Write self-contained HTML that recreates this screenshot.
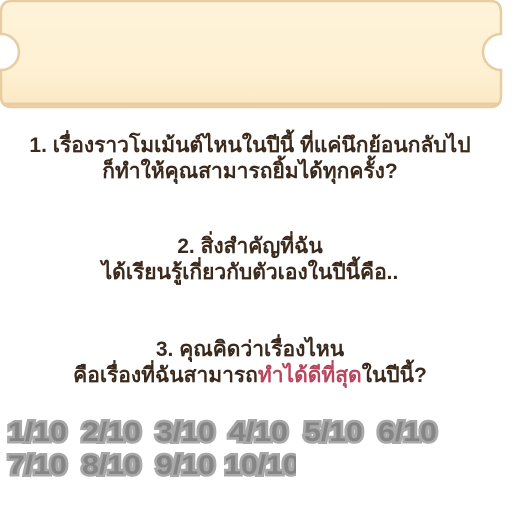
<!DOCTYPE html>
<html><head><meta charset="utf-8"><style>
body{margin:0;width:512px;height:512px;background:#fff;position:relative;overflow:hidden;font-family:"Liberation Sans","Noto Sans CJK SC",sans-serif;}
.q{position:absolute;left:0;width:500px;text-align:center;color:#3b2a1c;font-weight:bold;font-size:21px;line-height:26px;}
.hl{color:#b8465f}
.n{position:absolute;font-family:"Liberation Sans",sans-serif;font-weight:900;font-size:27px;line-height:28px;color:#858585;-webkit-text-stroke:5px #a8a8a8;paint-order:stroke fill;letter-spacing:0px;white-space:nowrap;transform:scaleX(1.12);transform-origin:0 0}
</style></head><body>
<svg width="512" height="112" style="position:absolute;left:0;top:0">
<defs><linearGradient id="g" x1="0" y1="0" x2="0" y2="1"><stop offset="0" stop-color="#fef3d9"/><stop offset="0.6" stop-color="#fef1d4"/><stop offset="1" stop-color="#fce9c4"/></linearGradient></defs>
<path d="M12,1 H490 Q501,1 501,12 V34 A18,18 0 0 0 501,70 V96 Q501,107 490,107 H12 Q1,107 1,96 V70 A18,18 0 0 0 1,34 V12 Q1,1 12,1 Z" fill="url(#g)" stroke="#e8cca2" stroke-width="2.5"/>
<path d="M4,104 H498" stroke="#e8cca2" stroke-width="3"/>
</svg>
<div class="q" style="top:133px">1. เรื่องราวโมเม้นต์ไหนในปีนี้ ที่แค่นึกย้อนกลับไป<br>ก็ทำให้คุณสามารถยิ้มได้ทุกครั้ง?</div>
<div class="q" style="top:234px">2. สิ่งสำคัญที่ฉัน<br>ได้เรียนรู้เกี่ยวกับตัวเองในปีนี้คือ..</div>
<div class="q" style="top:337px">3. คุณคิดว่าเรื่องไหน<br>คือเรื่องที่ฉันสามารถ<span class="hl">ทำได้ดีที่สุด</span>ในปีนี้?</div>
<div class="n" style="left:8px;top:418px">1/10</div>
<div class="n" style="left:82px;top:418px">2/10</div>
<div class="n" style="left:156px;top:418px">3/10</div>
<div class="n" style="left:229px;top:418px">4/10</div>
<div class="n" style="left:304px;top:418px">5/10</div>
<div class="n" style="left:378px;top:418px">6/10</div>
<div class="n" style="left:8px;top:451px">7/10</div>
<div class="n" style="left:82px;top:451px">8/10</div>
<div class="n" style="left:156px;top:451px">9/10</div>
<div style="position:absolute;left:224px;top:447px;width:72px;height:36px;overflow:hidden"><div class="n" style="left:0;top:4px">10/10</div></div>
</body></html>
